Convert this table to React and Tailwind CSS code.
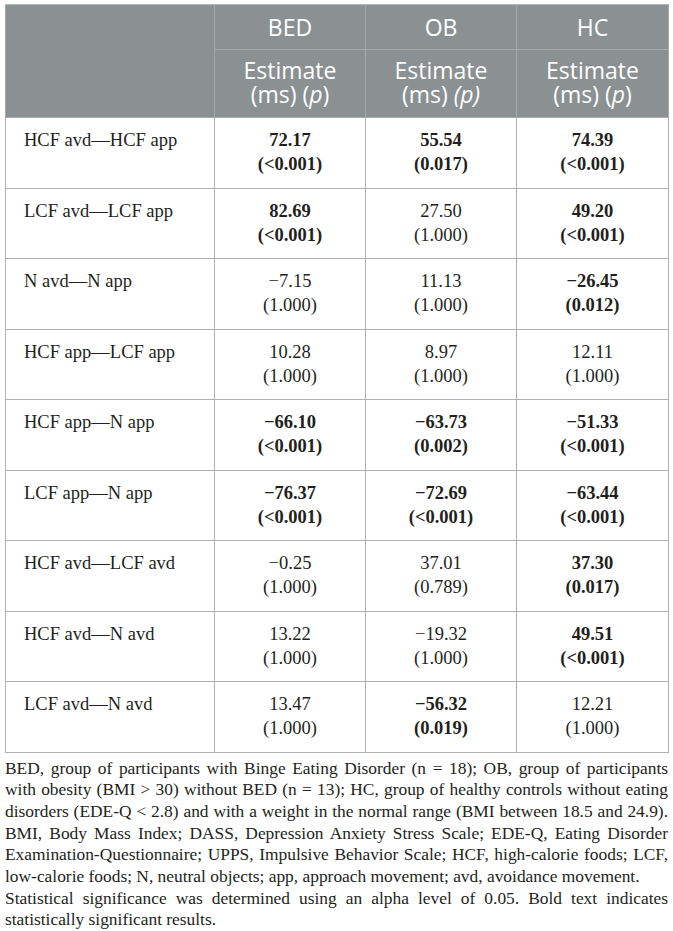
import React from "react";

const rows = [
  ["HCF avd—HCF app", ["72.17", "(<0.001)", true], ["55.54", "(0.017)", true], ["74.39", "(<0.001)", true]],
  ["LCF avd—LCF app", ["82.69", "(<0.001)", true], ["27.50", "(1.000)", false], ["49.20", "(<0.001)", true]],
  ["N avd—N app", ["−7.15", "(1.000)", false], ["11.13", "(1.000)", false], ["−26.45", "(0.012)", true]],
  ["HCF app—LCF app", ["10.28", "(1.000)", false], ["8.97", "(1.000)", false], ["12.11", "(1.000)", false]],
  ["HCF app—N app", ["−66.10", "(<0.001)", true], ["−63.73", "(0.002)", true], ["−51.33", "(<0.001)", true]],
  ["LCF app—N app", ["−76.37", "(<0.001)", true], ["−72.69", "(<0.001)", true], ["−63.44", "(<0.001)", true]],
  ["HCF avd—LCF avd", ["−0.25", "(1.000)", false], ["37.01", "(0.789)", false], ["37.30", "(0.017)", true]],
  ["HCF avd—N avd", ["13.22", "(1.000)", false], ["−19.32", "(1.000)", false], ["49.51", "(<0.001)", true]],
  ["LCF avd—N avd", ["13.47", "(1.000)", false], ["−56.32", "(0.019)", true], ["12.21", "(1.000)", false]],
];

const serif = { fontFamily: '"Liberation Serif", "Times New Roman", serif' };

const notes = [
  ["BED, group of participants with Binge Eating Disorder (n = 18); OB, group of participants", true],
  ["with obesity (BMI > 30) without BED (n = 13); HC, group of healthy controls without eating", true],
  ["disorders (EDE-Q < 2.8) and with a weight in the normal range (BMI between 18.5 and 24.9).", true],
  ["BMI, Body Mass Index; DASS, Depression Anxiety Stress Scale; EDE-Q, Eating Disorder", true],
  ["Examination-Questionnaire; UPPS, Impulsive Behavior Scale; HCF, high-calorie foods; LCF,", true],
  ["low-calorie foods; N, neutral objects; app, approach movement; avd, avoidance movement.", false],
  ["Statistical significance was determined using an alpha level of 0.05. Bold text indicates", true],
  ["statistically significant results.", false],
];

function HeadSub({ italicParens }) {
  return (
    <div className="leading-[24px] -mt-[4px]">
      <div>Estimate</div>
      <div>
        {italicParens ? (
          <span>
            (ms) <i>(p)</i>
          </span>
        ) : (
          <span>
            (ms) (<i>p</i>)
          </span>
        )}
      </div>
    </div>
  );
}

export default function App() {
  return (
    <div className="bg-white w-[673px] min-h-[931px] pl-[5px] pt-[4px]">
      <table className="border-collapse w-[663px] table-fixed text-[#231f20]" style={serif}>
        <colgroup>
          <col className="w-[209px]" />
          <col className="w-[151px]" />
          <col className="w-[151px]" />
          <col className="w-[152px]" />
        </colgroup>
        <thead
          className="text-white text-[23px]"
          style={{ fontFamily: '"Open Sans", "Noto Sans", sans-serif' }}
        >
          <tr className="bg-[#8b9192] h-[45px]">
            <th rowSpan={2} className="border border-[#a5aaab] border-t-[#b4b8b8] bg-[#8b9192]"></th>
            <th className="border border-[#a5aaab] border-t-[#b4b8b8] font-normal text-center leading-[24px]">BED</th>
            <th className="border border-[#a5aaab] border-t-[#b4b8b8] font-normal text-center leading-[24px]">OB</th>
            <th className="border border-[#a5aaab] border-t-[#b4b8b8] font-normal text-center leading-[24px]">HC</th>
          </tr>
          <tr className="bg-[#8b9192] h-[68px]">
            <th className="border border-[#a5aaab] font-normal text-center"><HeadSub /></th>
            <th className="border border-[#a5aaab] font-normal text-center"><HeadSub italicParens /></th>
            <th className="border border-[#a5aaab] font-normal text-center"><HeadSub /></th>
          </tr>
        </thead>
        <tbody className="text-[18.5px] leading-[24px]">
          {rows.map((r, i) => (
            <tr key={i} className="h-[70.5px]">
              <td className="border border-[#b0b0b0] align-top pl-[18px] pt-[10px]">{r[0]}</td>
              {r.slice(1).map((c, j) => (
                <td
                  key={j}
                  className={`border border-[#b0b0b0] align-top text-center pt-[10px] ${c[2] ? "font-bold" : ""}`}
                >
                  <div>{c[0]}</div>
                  <div>{c[1]}</div>
                </td>
              ))}
            </tr>
          ))}
        </tbody>
      </table>
      <div className="w-[663px] text-[17.4px] leading-[21.7px] text-[#231f20] mt-[5px]" style={serif}>
        {notes.map(([t, j], i) => (
          <div
            key={i}
            className={j ? "whitespace-nowrap text-justify [text-align-last:justify]" : "whitespace-nowrap text-left"}
          >
            {t}
          </div>
        ))}
      </div>
    </div>
  );
}
